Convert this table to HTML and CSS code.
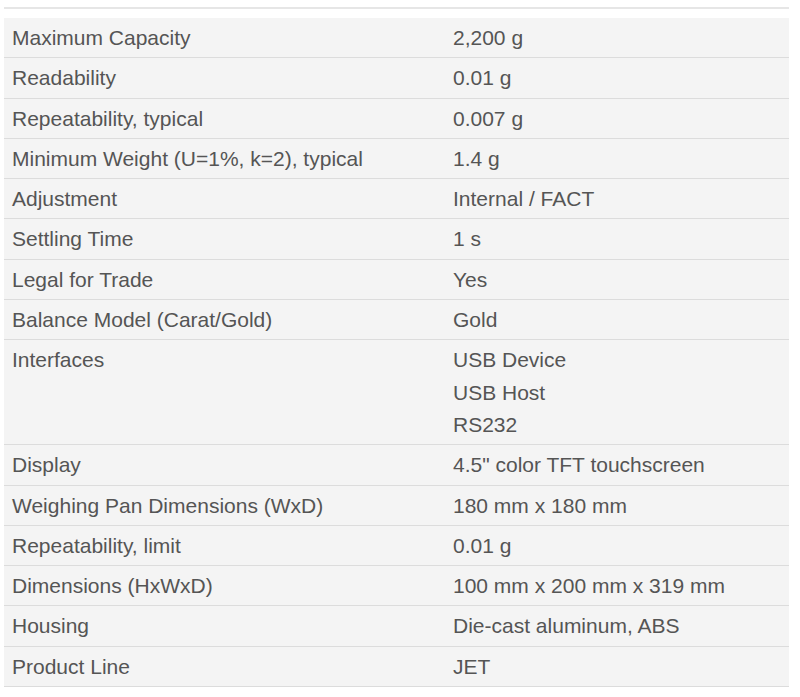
FILE: index.html
```html
<!DOCTYPE html>
<html>
<head>
<meta charset="utf-8">
<link rel="stylesheet" href="styles.css">
</head>
<body>
<div class="page">
  <div class="rule"></div>
  <table class="specs">
    <tr><td class="k">Maximum Capacity</td><td class="v">2,200 g</td></tr>
    <tr><td class="k">Readability</td><td class="v">0.01 g</td></tr>
    <tr><td class="k">Repeatability, typical</td><td class="v">0.007 g</td></tr>
    <tr><td class="k">Minimum Weight (U=1%, k=2), typical</td><td class="v">1.4 g</td></tr>
    <tr><td class="k">Adjustment</td><td class="v">Internal / FACT</td></tr>
    <tr><td class="k">Settling Time</td><td class="v">1 s</td></tr>
    <tr><td class="k">Legal for Trade</td><td class="v">Yes</td></tr>
    <tr><td class="k">Balance Model (Carat/Gold)</td><td class="v">Gold</td></tr>
    <tr><td class="k">Interfaces</td><td class="v">USB Device<br>USB Host<br>RS232</td></tr>
    <tr><td class="k">Display</td><td class="v">4.5" color TFT touchscreen</td></tr>
    <tr><td class="k">Weighing Pan Dimensions (WxD)</td><td class="v">180 mm x 180 mm</td></tr>
    <tr><td class="k">Repeatability, limit</td><td class="v">0.01 g</td></tr>
    <tr><td class="k">Dimensions (HxWxD)</td><td class="v">100 mm x 200 mm x 319 mm</td></tr>
    <tr><td class="k">Housing</td><td class="v">Die-cast aluminum, ABS</td></tr>
    <tr><td class="k">Product Line</td><td class="v">JET</td></tr>
  </table>
</div>
</body>
</html>
```

FILE: styles.css
```css
html, body {
  margin: 0;
  padding: 0;
  background: #ffffff;
}
.page {
  padding: 7px 11px 0 4px;
  font-family: "Liberation Sans", Arial, Helvetica, sans-serif;
  color: #555555;
}
.rule {
  height: 2px;
  background: #e6e6e6;
  margin-bottom: 9px;
}
.specs {
  width: 785px;
  border-collapse: collapse;
  background: #f4f4f4;
}
.specs td {
  font-size: 21px;
  line-height: 32.3px;
  padding: 4px 8px 3px 8px;
  border-bottom: 1px solid #dcdcdc;
  vertical-align: top;
}
.specs td.k {
  width: 425px;
}
```
